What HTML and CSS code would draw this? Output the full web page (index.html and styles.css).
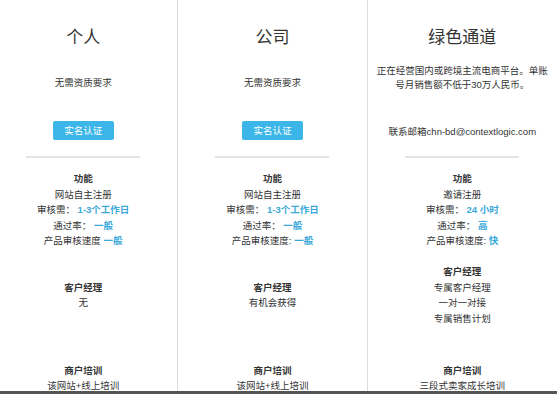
FILE: index.html
```html
<!DOCTYPE html>
<html lang="zh">
<head>
<meta charset="utf-8">
<link rel="stylesheet" href="styles.css">
</head>
<body>
<div class="frame">
  <div class="plans">
    <div class="plan">
      <div class="sec sec-title"><h2 class="title">个人</h2></div>
      <div class="sec sec-desc"><p class="desc">无需资质要求</p></div>
      <div class="sec sec-action"><span class="btn">实名认证</span></div>
      <div class="rule"></div>
      <div class="sec sec-func">
        <div class="head">功能</div>
        <div class="line">网站自主注册</div>
        <div class="line">审核需： <b class="val">1-3个工作日</b></div>
        <div class="line">通过率： <b class="val">一般</b></div>
        <div class="line">产品审核速度 <b class="val">一般</b></div>
      </div>
      <div class="sec sec-mgr">
        <div class="head">客户经理</div>
        <div class="line">无</div>
      </div>
      <div class="sec sec-train">
        <div class="head">商户培训</div>
        <div class="line">该网站+线上培训</div>
      </div>
    </div>
    <div class="plan">
      <div class="sec sec-title"><h2 class="title">公司</h2></div>
      <div class="sec sec-desc"><p class="desc">无需资质要求</p></div>
      <div class="sec sec-action"><span class="btn">实名认证</span></div>
      <div class="rule"></div>
      <div class="sec sec-func">
        <div class="head">功能</div>
        <div class="line">网站自主注册</div>
        <div class="line">审核需： <b class="val">1-3个工作日</b></div>
        <div class="line">通过率： <b class="val">一般</b></div>
        <div class="line">产品审核速度: <b class="val">一般</b></div>
      </div>
      <div class="sec sec-mgr">
        <div class="head">客户经理</div>
        <div class="line">有机会获得</div>
      </div>
      <div class="sec sec-train">
        <div class="head">商户培训</div>
        <div class="line">该网站+线上培训</div>
      </div>
    </div>
    <div class="plan">
      <div class="sec sec-title"><h2 class="title">绿色通道</h2></div>
      <div class="sec sec-desc"><p class="desc desc-long">正在经营国内或跨境主流电商平台。单账号月销售额不低于30万人民币。</p></div>
      <div class="sec sec-action"><p class="email">联系邮箱chn-bd@contextlogic.com</p></div>
      <div class="rule"></div>
      <div class="sec sec-func">
        <div class="head">功能</div>
        <div class="line">邀请注册</div>
        <div class="line">审核需： <b class="val">24 小时</b></div>
        <div class="line">通过率： <b class="val">高</b></div>
        <div class="line">产品审核速度: <b class="val">快</b></div>
      </div>
      <div class="sec sec-mgr">
        <div class="head">客户经理</div>
        <div class="line">专属客户经理</div>
        <div class="line">一对一对接</div>
        <div class="line">专属销售计划</div>
      </div>
      <div class="sec sec-train">
        <div class="head">商户培训</div>
        <div class="line">三段式卖家成长培训</div>
      </div>
    </div>
  </div>
</div>
</body>
</html>
```

FILE: styles.css
```css
html, body {
  margin: 0;
  padding: 0;
  background: #fff;
}
body {
  font-family: "Liberation Sans", "Noto Sans CJK SC", sans-serif;
  color: #333;
  font-size: 9.5px;
}
.frame {
  width: 557px;
  height: 391px;
  overflow: hidden;
  border-bottom: 3px solid #555;
}
.plans {
  display: flex;
  margin-left: -11px;
}
.plan {
  width: 190px;
  box-sizing: border-box;
  display: flex;
  flex-direction: column;
  text-align: center;
  border-right: 1px solid #dcdcdc;
}
.plan:last-child {
  border-right: none;
}
.sec {
  display: flex;
  flex-direction: column;
  justify-content: center;
  align-items: center;
}
.sec-title {
  height: 60px;
  justify-content: flex-start;
  padding-top: 24px;
  box-sizing: border-box;
}
.title {
  margin: 0;
  font-size: 17px;
  font-weight: normal;
  line-height: 24px;
  color: #333;
  font-family: "Noto Sans CJK SC", sans-serif;
}
.sec-desc {
  height: 46px;
}
.desc {
  margin: 0;
  line-height: 14px;
}
.desc-long {
  width: 172px;
  padding-bottom: 10px;
}
.sec-action {
  height: 48px;
}
.btn {
  display: inline-block;
  width: 61px;
  height: 19px;
  line-height: 19px;
  background: #3cb6e8;
  color: #fff;
  border-radius: 2px;
  font-size: 9.5px;
}
.email {
  margin: 0;
  padding-top: 4px;
  line-height: 14px;
}
.rule {
  width: 114px;
  height: 2px;
  background: #e4e4e4;
  margin: 2px auto 4px;
}
.sec-func {
  height: 96px;
}
.sec-mgr {
  height: 74px;
}
.sec-train {
  height: 92px;
}
.head {
  font-weight: bold;
  line-height: 15.5px;
  color: #333;
}
.line {
  line-height: 15.5px;
}
.val {
  color: #3aa8d8;
  font-weight: bold;
}
```
